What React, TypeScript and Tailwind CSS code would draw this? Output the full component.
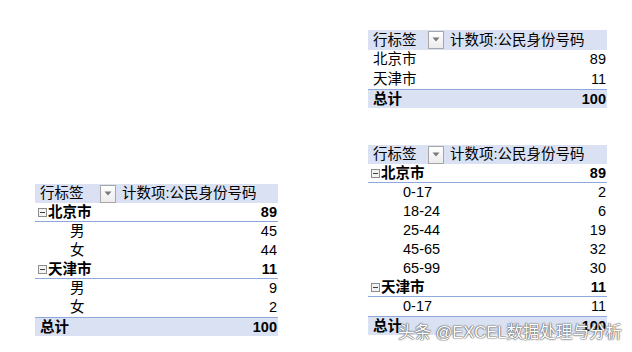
import React from "react";

type Row = { label: string; value: number; kind: "parent" | "child" | "plain" };

interface PivotProps {
  rows: Row[];
  total: number;
  labelW: number;
  valueW: number;
  rowH: string;
}

const FONT = "'Liberation Sans','Noto Sans CJK SC',sans-serif";

function Dropdown() {
  return (
    <div className="w-[16px] h-[18px] border border-[#a6a6a6] bg-gradient-to-b from-[#ffffff] to-[#ececec] flex items-center justify-center">
      <svg width="8" height="5" viewBox="0 0 8 5">
        <path d="M0.5 0.5 L7.5 0.5 L4 4.5 Z" fill="#7a7a7a" />
      </svg>
    </div>
  );
}

function Collapse() {
  return (
    <div className="w-[9px] h-[9px] border border-[#8c8c8c] bg-[#f3f3f3] flex items-center justify-center mr-[1px]">
      <div className="w-[5px] h-[1px] bg-[#404040]" />
    </div>
  );
}

function Pivot({ rows, total, labelW, valueW, rowH }: PivotProps) {
  return (
    <div className="text-[14.5px] text-black leading-none" style={{ fontFamily: FONT, width: labelW + valueW }}>
      {/* header */}
      <div className={`flex ${rowH} bg-[#d9e1f2] items-center`}>
        <div className="flex items-center justify-between pl-[5px] pr-[1px]" style={{ width: labelW }}>
          <span>行标签</span>
          <Dropdown />
        </div>
        <div className="pl-[5px]">计数项:公民身份号码</div>
      </div>

      {rows.map((r, i) => (
        <div
          key={i}
          className={`flex items-center ${rowH} ${r.kind === "parent" ? "font-bold border-b border-[#8ea9db]" : ""}`}
        >
          <div className="flex items-center" style={{ width: labelW }}>
            {r.kind === "parent" && (
              <div className="pl-[3px] flex items-center">
                <Collapse />
                <span>{r.label}</span>
              </div>
            )}
            {r.kind === "child" && <span className="pl-[35px]">{r.label}</span>}
            {r.kind === "plain" && <span className="pl-[5px]">{r.label}</span>}
          </div>
          <div className="text-right pr-[1px]" style={{ width: valueW }}>
            {r.value}
          </div>
        </div>
      ))}

      {/* total */}
      <div className={`flex items-center ${rowH} bg-[#d9e1f2] font-bold border-t border-[#8ea9db]`}>
        <div className="pl-[5px]" style={{ width: labelW }}>
          总计
        </div>
        <div className="text-right pr-[1px]" style={{ width: valueW }}>
          {total}
        </div>
      </div>
    </div>
  );
}

export default function App() {
  const genderRows: Row[] = [
    { label: "北京市", value: 89, kind: "parent" },
    { label: "男", value: 45, kind: "child" },
    { label: "女", value: 44, kind: "child" },
    { label: "天津市", value: 11, kind: "parent" },
    { label: "男", value: 9, kind: "child" },
    { label: "女", value: 2, kind: "child" },
  ];

  const cityRows: Row[] = [
    { label: "北京市", value: 89, kind: "plain" },
    { label: "天津市", value: 11, kind: "plain" },
  ];

  const ageRows: Row[] = [
    { label: "北京市", value: 89, kind: "parent" },
    { label: "0-17", value: 2, kind: "child" },
    { label: "18-24", value: 6, kind: "child" },
    { label: "25-44", value: 19, kind: "child" },
    { label: "45-65", value: 32, kind: "child" },
    { label: "65-99", value: 30, kind: "child" },
    { label: "天津市", value: 11, kind: "parent" },
    { label: "0-17", value: 11, kind: "child" },
  ];

  return (
    <div className="relative w-[632px] h-[352px] bg-white overflow-hidden flex">
      <div className="pl-[35px] pt-[184px]">
        <Pivot rows={genderRows} total={100} labelW={82} valueW={161} rowH="h-[19px]" />
      </div>

      <div className="ml-[90px] pt-[30px] flex flex-col gap-[37px]">
        <Pivot rows={cityRows} total={100} labelW={77} valueW={162} rowH="h-[19.5px]" />
        <Pivot rows={ageRows} total={100} labelW={77} valueW={162} rowH="h-[19px]" />
      </div>

      {/* watermark */}
      <div
        className="absolute left-[398px] top-[324px] whitespace-nowrap text-[16.5px] leading-none text-white [text-shadow:0_0_1px_#555,0_0_1px_#555,0_0_2px_#777]"
        style={{ fontFamily: "'Liberation Sans','Noto Sans CJK SC',sans-serif" }}
      >
        头条 @EXCEL数据处理与分析
      </div>
    </div>
  );
}
